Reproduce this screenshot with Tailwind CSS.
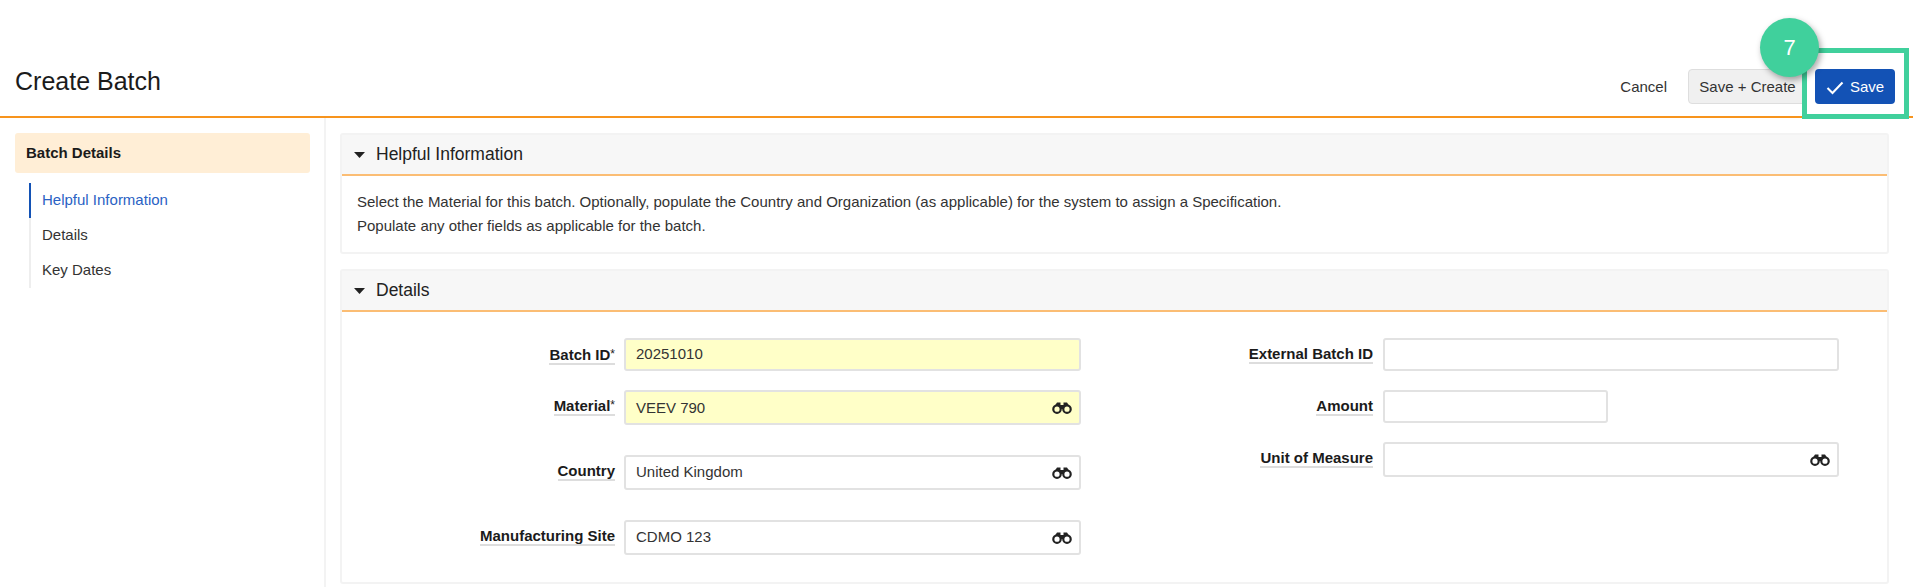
<!DOCTYPE html>
<html>
<head>
<meta charset="utf-8">
<script src="https://cdn.jsdelivr.net/npm/@tailwindcss/browser@4"></script>
</head>
<body class="bg-white font-['Liberation_Sans',Arial,sans-serif] text-[#333] overflow-hidden">
<svg class="hidden" width="0" height="0"><defs>
<symbol id="bino" viewBox="0 0 20 12"><path d="M3 3.5 L5 .5 H8.5 V3 H11.5 V.5 H15 L17 3.5 L13 4 H7 Z" fill="#222"/><circle cx="5" cy="7.2" r="3.7" fill="none" stroke="#222" stroke-width="2.2"/><circle cx="15" cy="7.2" r="3.7" fill="none" stroke="#222" stroke-width="2.2"/><rect x="8" y="3" width="4" height="4" fill="#222"/></symbol>
</defs></svg>
<div class="relative w-[1913px] h-[587px] overflow-hidden">
  <header class="h-[118px] border-b-2 border-[#f7941d] flex items-start justify-between pl-[15px] pr-[18px] pt-[69px]">
    <h1 class="text-[25px] leading-[26px] -mt-[1px] text-[#1b1b1b]">Create Batch</h1>
    <div class="flex items-center h-[35px]">
      <span class="text-[15px] mr-[21px] mt-[2px] text-[#333]">Cancel</span>
      <button class="h-[35px] w-[119px] pt-[2px] rounded-[4px] bg-[#f0f0f0] border border-[#dedede] text-[15px] text-[#333]">Save + Create</button>
      <button class="ml-[8px] h-[35px] w-[80px] pt-[2px] rounded-[4px] bg-[#1352b5] text-white text-[15px] flex items-center justify-center gap-[6px]">
        <svg width="18" height="14" viewBox="0 0 18 14" fill="none"><path d="M1.5 7 L6.5 12 L16.5 1.5" stroke="#fff" stroke-width="2.1"/></svg>Save
      </button>
    </div>
  </header>
  <div class="flex h-[469px]">
    <aside class="w-[326px] shrink-0 border-r-2 border-[#f3f3f3] pl-[15px] pr-[15px] pt-[15px]">
      <div class="h-[40px] w-[295px] rounded-[3px] bg-[#ffeed6] flex items-center pl-[11px] text-[15px] font-bold text-[#1b1b1b]">Batch Details</div>
      <nav class="ml-[14px] mt-[10px] w-[200px] border-l-2 border-[#eeeeee] text-[15px]">
        <div class="h-[35px] flex items-center pl-[11px] -ml-[2px] border-l-2 border-[#1352b5] text-[#2a62c4]">Helpful Information</div>
        <div class="h-[35px] flex items-center pl-[11px]">Details</div>
        <div class="h-[35px] flex items-center pl-[11px]">Key Dates</div>
      </nav>
    </aside>
    <main class="w-[1549px] ml-[14px] pt-[15px]">
      <section class="h-[121px] border-2 border-[#f3f3f3] rounded-[3px]">
        <div class="h-[41px] bg-[#f7f7f7] border-b-2 border-[#fbbd74] flex items-center pl-[12px] text-[17.5px] text-[#222]">
          <svg width="11" height="6" viewBox="0 0 11 6" class="mr-[11px]"><path d="M0 0 H11 L5.5 6 Z" fill="#222"/></svg>Helpful Information
        </div>
        <div class="pl-[15px] pt-[14px] text-[15px] leading-[24px] text-[#333]">
          <p>Select the Material for this batch. Optionally, populate the Country and Organization (as applicable) for the system to assign a Specification.</p>
          <p>Populate any other fields as applicable for the batch.</p>
        </div>
      </section>
      <section class="mt-[15px] h-[315px] border-2 border-[#f3f3f3] rounded-[3px]">
        <div class="h-[41px] bg-[#f7f7f7] border-b-2 border-[#fbbd74] flex items-center pl-[12px] text-[17.5px] text-[#222]">
          <svg width="11" height="6" viewBox="0 0 11 6" class="mr-[11px]"><path d="M0 0 H11 L5.5 6 Z" fill="#222"/></svg>Details
        </div>
        <div class="flex pt-[26px] text-[15px]">
          <div class="w-[739px] shrink-0 flex flex-col">
            <div class="flex items-center h-[33px]">
              <div class="w-[273px] text-right mt-[1px]"><span class="font-bold text-[#1b1b1b] border-b-2 border-[#dddddd]">Batch ID<span class="font-normal text-[12px] relative -top-[2px]">*</span></span></div>
              <div class="ml-[9px] w-[457px] h-[33px] bg-[#ffffc8] border-2 border-[#e2e2e2] rounded-[3px] flex items-center pl-[10px]">20251010</div>
            </div>
            <div class="flex items-center h-[35px] mt-[19px]">
              <div class="w-[273px] text-right -mt-[2px]"><span class="font-bold text-[#1b1b1b] border-b-2 border-[#dddddd]">Material<span class="font-normal text-[12px] relative -top-[2px]">*</span></span></div>
              <div class="ml-[9px] w-[457px] h-[35px] bg-[#ffffc8] border-2 border-[#e2e2e2] rounded-[3px] flex items-center justify-between pl-[10px] pr-[7px]"><span class="mt-[2px]">VEEV 790</span><svg width="20" height="12"><use href="#bino"/></svg></div>
            </div>
            <div class="flex items-center h-[35px] mt-[30px]">
              <div class="w-[273px] text-right -mt-[2px]"><span class="font-bold text-[#1b1b1b] border-b-2 border-[#dddddd]">Country</span></div>
              <div class="ml-[9px] w-[457px] h-[35px] border-2 border-[#e2e2e2] rounded-[3px] flex items-center justify-between pl-[10px] pr-[7px]">United Kingdom<svg width="20" height="12"><use href="#bino"/></svg></div>
            </div>
            <div class="flex items-center h-[35px] mt-[30px]">
              <div class="w-[273px] text-right -mt-[2px]"><span class="font-bold text-[#1b1b1b] border-b-2 border-[#dddddd]">Manufacturing Site</span></div>
              <div class="ml-[9px] w-[457px] h-[35px] border-2 border-[#e2e2e2] rounded-[3px] flex items-center justify-between pl-[10px] pr-[7px]">CDMO 123<svg width="20" height="12"><use href="#bino"/></svg></div>
            </div>
          </div>
          <div class="flex-1 flex flex-col">
            <div class="flex items-center h-[33px]">
              <div class="w-[292px] text-right"><span class="font-bold text-[#1b1b1b] border-b-2 border-[#dddddd]">External Batch ID</span></div>
              <div class="ml-[10px] w-[456px] h-[33px] border-2 border-[#e2e2e2] rounded-[3px]"></div>
            </div>
            <div class="flex items-center h-[33px] mt-[19px]">
              <div class="w-[292px] text-right"><span class="font-bold text-[#1b1b1b] border-b-2 border-[#dddddd]">Amount</span></div>
              <div class="ml-[10px] w-[225px] h-[33px] border-2 border-[#e2e2e2] rounded-[3px]"></div>
            </div>
            <div class="flex items-center h-[35px] mt-[19px]">
              <div class="w-[292px] text-right -mt-[3px]"><span class="font-bold text-[#1b1b1b] border-b-2 border-[#dddddd]">Unit of Measure</span></div>
              <div class="ml-[10px] w-[456px] h-[35px] border-2 border-[#e2e2e2] rounded-[3px] flex items-center justify-end pr-[7px]"><svg width="20" height="12"><use href="#bino"/></svg></div>
            </div>
          </div>
        </div>
      </section>
    </main>
  </div>
  <div class="absolute left-[1802px] top-[48px] w-[107px] h-[71px] border-[5px] border-[#40d09c]"></div>
  <div class="absolute left-[1760px] top-[18px] w-[59px] h-[59px] rounded-full bg-[#40d09c] shadow-[2px_3px_6px_rgba(0,0,0,0.35)] flex items-center justify-center text-white text-[22px]">7</div>
</div>
</body>
</html>
